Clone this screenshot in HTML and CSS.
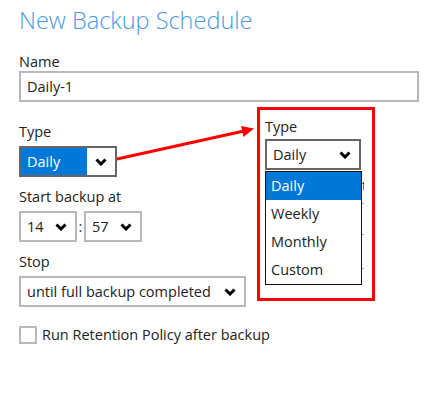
FILE: index.html
```html
<!doctype html>
<html lang="en">
<head>
    <meta charset="utf-8">
    <title>New Backup Schedule</title>
    <link rel="stylesheet" href="styles.css">
</head>
<body>
    <div class="page">
        <h1 class="title">New Backup Schedule</h1>

        <div class="field field-name">
            <label class="form-label">Name</label>
            <div class="text-input">Daily-1</div>
        </div>

        <div class="field field-type">
            <label class="form-label">Type</label>
            <div class="select select-dark select-type">
                <span class="select-value selected">Daily</span>
                <span class="chevron-box">
                    <svg class="chevron" width="12" height="8" viewBox="0 0 12 8"><path d="M1.5 1.5 L6 6 L10.5 1.5" /></svg>
                </span>
            </div>
        </div>

        <div class="field">
            <label class="form-label">Start backup at</label>
            <div class="time-row">
                <div class="select select-time">
                    <span class="select-value">14</span>
                    <svg class="chevron" width="12" height="8" viewBox="0 0 12 8"><path d="M1.5 1.5 L6 6 L10.5 1.5" /></svg>
                </div>
                <span class="colon">:</span>
                <div class="select select-time">
                    <span class="select-value">57</span>
                    <svg class="chevron" width="12" height="8" viewBox="0 0 12 8"><path d="M1.5 1.5 L6 6 L10.5 1.5" /></svg>
                </div>
            </div>
        </div>

        <div class="field">
            <label class="form-label">Stop</label>
            <div class="select select-stop">
                <span class="select-value">until full backup completed</span>
                <svg class="chevron" width="12" height="8" viewBox="0 0 12 8"><path d="M1.5 1.5 L6 6 L10.5 1.5" /></svg>
            </div>
        </div>

        <div class="check-row">
            <span class="checkbox"></span>
            <span class="check-label">Run Retention Policy after backup</span>
        </div>
    </div>

    <!-- callout arrow -->
    <svg class="arrow" width="437" height="394" viewBox="0 0 437 394">
        <line x1="117" y1="159" x2="244" y2="131" stroke="#ff0000" stroke-width="3" />
        <polygon points="254,128.5 241,126 243.5,137" fill="#ff0000" />
    </svg>

    <!-- zoomed inset of the open dropdown -->
    <div class="inset">
        <label class="form-label">Type</label>
        <div class="select select-dark inset-select">
            <span class="select-value">Daily</span>
            <svg class="chevron" width="12" height="8" viewBox="0 0 12 8"><path d="M1.5 1.5 L6 6 L10.5 1.5" /></svg>
        </div>
        <div class="behind">
            <span class="behind-label">Start backup at</span>
            <span class="tick tick-1"></span>
            <span class="tick tick-2"></span>
            <span class="tick tick-3"></span>
        </div>
        <ul class="dropdown">
            <li class="active">Daily</li>
            <li>Weekly</li>
            <li>Monthly</li>
            <li>Custom</li>
        </ul>
    </div>
</body>
</html>
```

FILE: styles.css
```css
body {
    margin: 0;
    background-color: #fff;
    font-family: "Open Sans", "Noto Sans", Arial, sans-serif;
    font-size: 14.5px;
    color: #222;
}
.page {
    padding: 5px 19px 0;
    width: 400px;
}
.title {
    margin: 0 0 17px;
    font-size: 23.5px;
    font-weight: 300;
    color: #4a9ae2;
    line-height: 30px;
}
.field {
    margin-bottom: 10px;
}
.field-name {
    margin-bottom: 20px;
}
.form-label {
    display: block;
    line-height: 19px;
    margin-bottom: 5px;
}
.field-name .form-label {
    margin-bottom: 0;
}
.text-input {
    height: 27px;
    line-height: 27px;
    border: 2px solid #b8b8b8;
    padding: 0 6px;
}
.select {
    display: flex;
    align-items: center;
    justify-content: space-between;
    box-sizing: border-box;
    height: 31px;
    border: 2px solid #b8b8b8;
    padding: 0 8px 0 6px;
}
.select-dark {
    border-color: #666;
}
.select-type {
    width: 98px;
    padding: 0;
}
.select-type .selected {
    background-color: #0078d7;
    color: #fff;
    flex: 1;
    height: 100%;
    line-height: 27px;
    padding-left: 6px;
}
.chevron-box {
    width: 28px;
    display: flex;
    justify-content: center;
}
.chevron path {
    fill: none;
    stroke: #000;
    stroke-width: 3;
}
.time-row {
    display: flex;
    align-items: center;
}
.select-time {
    width: 58px;
}
.colon {
    width: 7px;
    text-align: center;
    color: #333;
}
.select-stop {
    width: 227px;
}
.check-row {
    display: flex;
    align-items: center;
    margin-top: 18px;
}
.checkbox {
    width: 14px;
    height: 14px;
    border: 2px solid #b8b8b8;
    margin-right: 5px;
}

/* overlay callout */
.arrow {
    position: absolute;
    left: 0;
    top: 0;
}
.inset {
    position: absolute;
    left: 257px;
    top: 107px;
    width: 107px;
    height: 181px;
    border: 3px solid #ff0000;
    background-color: #fff;
    padding: 7px 0 0 5px;
    overflow: hidden;
}
.inset .form-label {
    margin-bottom: 3px;
}
.inset-select {
    width: 96px;
    height: 31px;
    padding: 0 8px 0 6px;
}
.behind {
    position: relative;
    width: 99px;
    height: 130px;
    overflow: hidden;
}
.behind-label {
    position: absolute;
    left: 0;
    top: 6px;
    white-space: nowrap;
    color: #222;
}
.tick {
    position: absolute;
    left: 97px;
    width: 2px;
    height: 1px;
    background-color: #aaa;
}
.tick-1 { top: 33px; }
.tick-2 { top: 64px; }
.tick-3 { top: 98px; }
.dropdown {
    position: absolute;
    left: 5px;
    top: 61px;
    width: 95px;
    margin: 0;
    padding: 0;
    list-style: none;
    border: 1px solid #111;
    background-color: #fff;
}
.dropdown li {
    height: 28px;
    line-height: 27px;
    padding-left: 5px;
}
.dropdown .active {
    background-color: #0078d7;
    color: #fff;
}
```
